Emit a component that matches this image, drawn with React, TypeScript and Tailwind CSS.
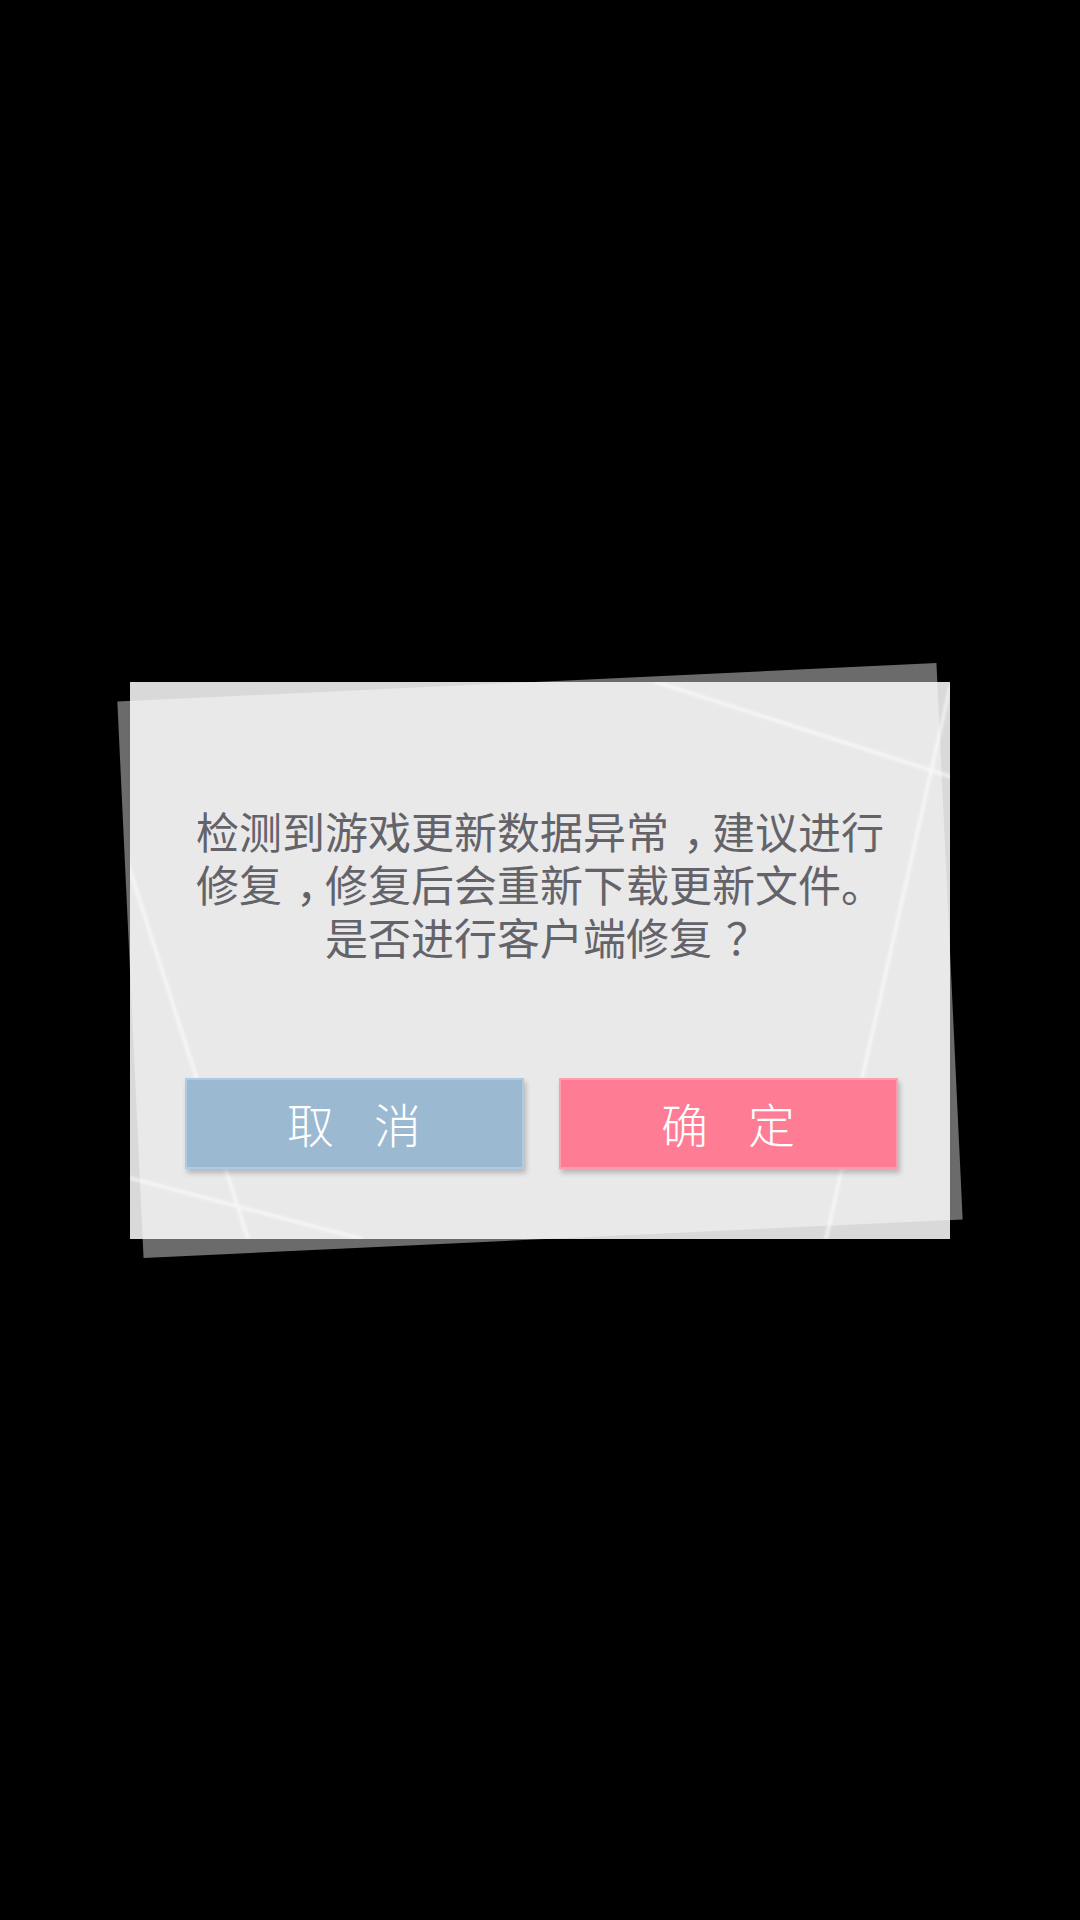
import React from "react";

// faint light streaks across the card face
const Streaks = () => (
  <svg className="absolute inset-0 pointer-events-none" width="820" height="557" viewBox="0 0 820 557">
    <defs>
      <filter id="soft" x="-10%" y="-10%" width="120%" height="120%">
        <feGaussianBlur stdDeviation="1.4" />
      </filter>
    </defs>
    <g stroke="#ffffff" strokeWidth="3" strokeLinecap="round" opacity="0.7" filter="url(#soft)">
      <line x1="526" y1="0" x2="822" y2="95" />
      <line x1="820" y1="5" x2="696" y2="557" />
      <line x1="-8" y1="163" x2="118" y2="557" />
      <line x1="0" y1="496" x2="232" y2="557" />
    </g>
  </svg>
);

// full-width punctuation nudged to the middle of its cell, as on the device
const P = ({ c }: { c: string }) => (
  <span className="inline-block w-[43px] translate-x-[14px]">{c}</span>
);

const DialogButton = ({ label, tone }: { label: [string, string]; tone: "blue" | "pink" }) => (
  <button
    className={`w-[339px] h-[91px] flex items-center justify-center gap-[40px] text-white text-[47px] font-light font-['Noto_Sans_CJK_SC','Noto_Sans',sans-serif] border-2 shadow-[2px_4px_5px_rgba(0,0,0,0.22)] ${
      tone === "blue" ? "bg-[#9bb9d1] border-[#aecbe6]" : "bg-[#ff7d94] border-[#ff9cae]"
    }`}
  >
    <span>{label[0]}</span>
    <span>{label[1]}</span>
  </button>
);

export default function App() {
  return (
    <div className="w-[1080px] h-[1920px] bg-black flex items-center justify-center">
      <div className="relative w-[820px] h-[557px]">
        {/* back sheet */}
        <div className="absolute inset-0 bg-[rgba(255,255,255,0.42)] rotate-[-2.7deg]" />

        {/* front sheet */}
        <div className="relative w-full h-full bg-[rgba(255,255,255,0.85)] overflow-hidden flex flex-col items-center pt-[122px]">
          <Streaks />
          <div className="relative flex flex-col items-center text-[43px] leading-[53px] text-[#636369] font-['Noto_Sans_CJK_SC','Noto_Sans',sans-serif]">
            <p className="h-[53px] whitespace-nowrap">
              检测到游戏更新数据异常<P c="，" />建议进行
            </p>
            <p className="h-[53px] whitespace-nowrap">
              修复<P c="，" />修复后会重新下载更新文件。
            </p>
            <p className="h-[53px] whitespace-nowrap">
              是否进行客户端修复<P c="？" />
            </p>
          </div>
          <div className="relative mt-[115px] flex gap-[35px] pl-[2px]">
            <DialogButton label={["取", "消"]} tone="blue" />
            <DialogButton label={["确", "定"]} tone="pink" />
          </div>
        </div>
      </div>
    </div>
  );
}
